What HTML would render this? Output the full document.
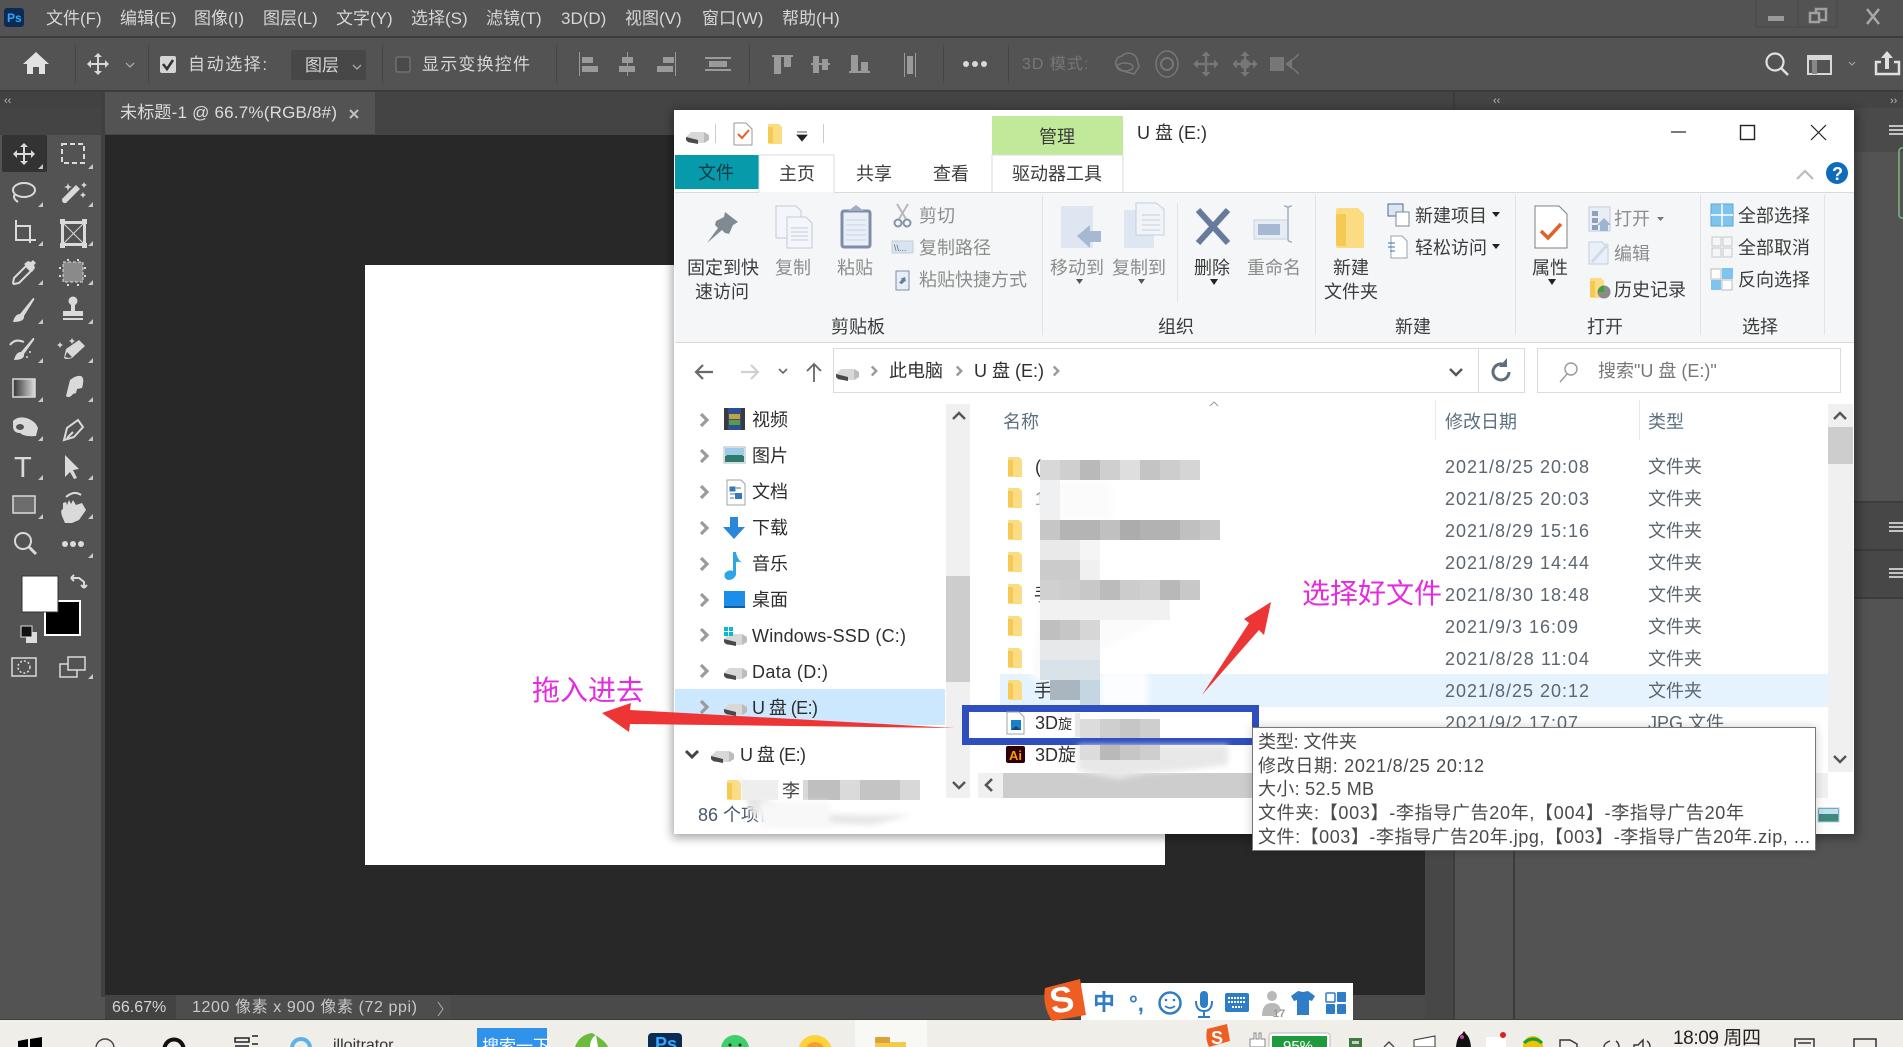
<!DOCTYPE html>
<html lang="zh"><head><meta charset="utf-8"><title>Photoshop</title>
<style>
html,body{margin:0;padding:0;background:#535353;width:1903px;height:1047px;overflow:hidden}
svg{display:block;position:absolute;left:0;top:0}
text{font-family:"Liberation Sans","Noto Sans CJK SC",sans-serif;white-space:pre}
.m{font-size:17px;fill:#d6d6d6}
.r{font-size:18px;fill:#3c3c3c}
.g{font-size:18px;fill:#8d8d8d}
.d{font-size:18px;fill:#5c6670}
.n{font-size:18px;fill:#2e2e2e}
.tt{font-size:18px;fill:#4a4a4a}
</style></head><body>
<svg width="1903" height="1047" viewBox="0 0 1903 1047" xmlns="http://www.w3.org/2000/svg">
<defs>
<filter id="sh" x="-5%" y="-5%" width="110%" height="110%"><feGaussianBlur stdDeviation="5"/></filter>
<filter id="b3" x="-20%" y="-20%" width="140%" height="140%"><feGaussianBlur stdDeviation="3"/></filter>
<path id="mv" d="M0-11l4 4h-3v6h6v-3l4 4-4 4v-3h-6v6h3l-4 4-4-4h3v-6h-6v3l-4-4 4-4v3h6v-6h-3z"/>
<g id="fd"><path d="M0 1q0-1 1-1h10l3 3v17H1q-1 0-1-1z" fill="#fbdc83"/><path d="M0 3h5v16H1q-1 0-1-1z" fill="#f6c955"/></g>
<g id="dr"><path d="M0 7l5-5h13l5 3v5l-5 3H3l-3-3z" fill="#d8d8d8"/><path d="M0 7l12 3v4l-10-2-2-2z" fill="#4a4a4a"/><path d="M18 2l5 3v5l-5 3z" fill="#bcbcbc"/></g>
<path id="ch" d="M-3-6l6 6-6 6" fill="none" stroke="#9a9a9a" stroke-width="3.200"/>
<path id="tri" d="M5 0v5h-5z" fill="#c8c8c8"/>
</defs>

<!-- PS chrome -->
<rect width="1903" height="1047" fill="#535353"/>
<rect y="36" width="1903" height="2" fill="#3d3d3d"/>
<rect y="90" width="1903" height="45" fill="#444"/>
<rect y="90" width="1903" height="2" fill="#3b3b3b"/>
<rect x="4" y="8" width="20" height="19" rx="3" fill="#0d2b52"/>
<text x="7" y="22" font-size="12" font-weight="bold" fill="#31a8ff">Ps</text>
<g class="m">
<text class="m" x="46" y="24">文件(F)</text><text class="m" x="120" y="24">编辑(E)</text><text class="m" x="194" y="24">图像(I)</text><text class="m" x="263" y="24">图层(L)</text><text class="m" x="336" y="24">文字(Y)</text><text class="m" x="411" y="24">选择(S)</text><text class="m" x="486" y="24">滤镜(T)</text><text class="m" x="561" y="24">3D(D)</text><text class="m" x="625" y="24">视图(V)</text><text class="m" x="702" y="24">窗口(W)</text><text class="m" x="782" y="24">帮助(H)</text>
</g>
<!-- ps win btns -->
<path d="M1756 0v27h81V0M1798 0v27" fill="none" stroke="#4a4a4a"/>
<rect x="1768" y="16" width="16" height="5" fill="#9a9a9a"/>
<rect x="1816" y="9" width="10" height="11" fill="none" stroke="#a0a0a0" stroke-width="2.500"/><rect x="1810" y="13" width="9" height="9" fill="#535353" stroke="#a0a0a0" stroke-width="2.500"/>
<path d="M1867 9l12 15M1879 9l-12 15" stroke="#a8a8a8" stroke-width="2.500"/>
<!-- options bar -->
<path d="M36 52l13 12h-4v10h-6v-7h-6v7h-6V64h-4z" fill="#e2e2e2"/>
<g fill="#444"><rect x="75" y="45" width="1" height="38"/><rect x="148" y="45" width="1" height="38"/><rect x="382" y="45" width="1" height="38"/><rect x="556" y="45" width="1" height="38"/><rect x="749" y="45" width="1" height="38"/><rect x="943" y="45" width="1" height="38"/><rect x="1008" y="45" width="1" height="38"/></g>
<use href="#mv" transform="translate(98 64)" fill="#d8d8d8"/>
<path d="M126 63l4 4 4-4" fill="none" stroke="#aaa" stroke-width="1.300"/>
<rect x="160" y="56" width="16" height="17" rx="2" fill="#d5d5d5"/><path d="M163 64l4 5 6-9" fill="none" stroke="#333" stroke-width="2.500"/>
<text class="m" x="188" y="70" letter-spacing="1.600" fill="#cdcdcd">自动选择:</text>
<rect x="291" y="50" width="75" height="30" rx="2" fill="#474747"/>
<text class="m" x="305" y="71" fill="#cdcdcd">图层</text>
<path d="M353 65l4 4 4-4" fill="none" stroke="#aaa" stroke-width="1.300"/>
<rect x="396" y="57" width="14" height="15" rx="2" fill="#4a4a4a" stroke="#707070" stroke-width="1.500"/>
<text class="m" x="422" y="70" fill="#bbb" textLength="108">显示变换控件</text>
<g fill="#9a9a9a">
<rect x="579" y="52" width="1" height="24"/><rect x="582" y="57" width="11" height="6"/><rect x="582" y="66" width="16" height="6"/>
<rect x="627" y="52" width="1" height="24"/><rect x="622" y="57" width="11" height="6"/><rect x="619" y="66" width="16" height="6"/>
<rect x="675" y="52" width="1" height="24"/><rect x="663" y="57" width="11" height="6"/><rect x="657" y="66" width="16" height="6"/>
<rect x="705" y="57" width="26" height="2"/><rect x="709" y="61" width="18" height="6"/><rect x="705" y="69" width="26" height="2"/>
<rect x="772" y="55" width="21" height="2"/><rect x="774" y="57" width="7" height="17"/><rect x="784" y="57" width="7" height="10"/>
<rect x="811" y="63" width="19" height="2"/><rect x="813" y="56" width="6" height="17"/><rect x="822" y="59" width="6" height="11"/>
<rect x="849" y="71" width="21" height="2"/><rect x="851" y="55" width="7" height="16"/><rect x="861" y="62" width="7" height="9"/>
<rect x="904" y="53" width="1" height="24"/><rect x="915" y="53" width="1" height="24"/><rect x="907" y="56" width="6" height="18"/>
</g>
<g fill="#d8d8d8"><circle cx="966" cy="64" r="3"/><circle cx="975" cy="64" r="3"/><circle cx="984" cy="64" r="3"/></g>
<text x="1022" y="69" font-size="16" fill="#777" letter-spacing="1">3D 模式:</text>
<g fill="none" stroke="#777" stroke-width="1.500">
<path d="M1117 67a7 7 0 0 1 5-11 9 9 0 0 1 15 3l2 8-5 7-11-3z"/><ellipse cx="1125" cy="67" rx="8" ry="4"/>
<ellipse cx="1167" cy="64" rx="11" ry="13"/><circle cx="1167" cy="64" r="6" stroke-width="2"/>
</g>
<use href="#mv" transform="translate(1206 64) scale(1.150)" fill="#777"/>
<use href="#mv" transform="translate(1245 64) scale(1.150)" fill="#777"/><circle cx="1245" cy="64" r="5" fill="#777"/>
<path d="M1270 57h14v14h-14z" fill="#777"/><path d="M1299 54l-11 10 11 10" fill="none" stroke="#777" stroke-width="1.500"/><path d="M1285 64l7-5v10z" fill="#777"/>
<circle cx="1775" cy="62" r="8.500" fill="none" stroke="#e0e0e0" stroke-width="2.200"/><path d="M1781 68l7 7" stroke="#e0e0e0" stroke-width="2.500"/>
<rect x="1808" y="56" width="23" height="18" fill="none" stroke="#d8d8d8" stroke-width="2"/><rect x="1808" y="56" width="23" height="4" fill="#d8d8d8"/><rect x="1812" y="60" width="5" height="14" fill="#888"/>
<path d="M1849 62l3 3 3-3" fill="none" stroke="#aaa"/>
<path d="M1881 62h-5v12h23V62h-5" fill="none" stroke="#e0e0e0" stroke-width="2.500"/><path d="M1887 51l6 7h-4v11h-4V58h-4z" fill="#e0e0e0"/>

<!-- tab row -->
<rect x="0" y="92" width="101" height="16" fill="#424242"/>
<text x="4" y="104" font-size="11" fill="#bbb">‹‹</text>
<rect x="101" y="92" width="4" height="905" fill="#404040"/>
<rect x="105" y="92" width="270" height="42" fill="#535353"/>
<text x="120" y="118" font-size="17" fill="#dcdcdc" textLength="217">未标题-1 @ 66.7%(RGB/8#)</text>
<path d="M350 110l8 8M358 110l-8 8" stroke="#c0c0c0" stroke-width="2"/>
<!-- grip -->
<path d="M33 115v8M36 115v8M39 115v8M42 115v8M45 115v8M48 115v8M51 115v8M54 115v8M57 115v8" stroke="#444" stroke-width="1"/>
<!-- canvas -->
<rect x="105" y="135" width="1320" height="860" fill="#282828"/>
<rect x="365" y="265" width="800" height="600" fill="#fff"/>
<!-- status -->
<rect x="105" y="995" width="1320" height="25" fill="#4a4a4a"/>
<rect x="105" y="995" width="71" height="24" fill="#434343"/>
<rect x="176" y="995" width="275" height="24" fill="#4d4d4d"/>
<text x="112" y="1012" font-size="16" fill="#d4d4d4">66.67%</text>
<text x="192" y="1012" font-size="16" fill="#c8c8c8" textLength="225">1200 像素 x 900 像素 (72 ppi)</text>
<path d="M438 1002l5 7-5 7" fill="none" stroke="#aaa"/>
<!-- right panels -->
<rect x="1425" y="135" width="28" height="885" fill="#474747"/>
<rect x="1453" y="92" width="2" height="928" fill="#3c3c3c"/>
<rect x="1513" y="835" width="2" height="185" fill="#3c3c3c"/>
<rect x="1455" y="92" width="448" height="16" fill="#444"/>
<text x="1493" y="104" font-size="11" fill="#bbb">‹‹</text><text x="1890" y="104" font-size="11" fill="#bbb">››</text>
<rect x="1854" y="108" width="49" height="44" fill="#4a4a4a"/>
<rect x="1854" y="502" width="49" height="48" fill="#474747"/><rect x="1854" y="550" width="49" height="48" fill="#474747"/>
<g fill="#3c3c3c"><rect x="1854" y="501" width="49" height="2"/><rect x="1854" y="549" width="49" height="2"/><rect x="1854" y="597" width="49" height="2"/></g>
<g fill="#c4c4c4"><rect x="1889" y="125" width="14" height="2"/><rect x="1889" y="129" width="14" height="2"/><rect x="1889" y="133" width="14" height="2"/><rect x="1889" y="522" width="14" height="2"/><rect x="1889" y="526" width="14" height="2"/><rect x="1889" y="530" width="14" height="2"/><rect x="1889" y="568" width="14" height="2"/><rect x="1889" y="572" width="14" height="2"/><rect x="1889" y="576" width="14" height="2"/></g>
<rect x="1899" y="148" width="8" height="70" rx="3" fill="none" stroke="#7fb77f" stroke-width="1.500"/>

<!-- tool icons -->
<rect x="2" y="135" width="45" height="37" rx="2" fill="#333"/>
<g fill="#dadada" stroke="none">
<use href="#mv" transform="translate(24 154)"/>
<rect x="62" y="144" width="22" height="19" fill="none" stroke="#dadada" stroke-width="2" stroke-dasharray="5 3"/>
<ellipse cx="24" cy="190" rx="11" ry="7" fill="none" stroke="#dadada" stroke-width="2"/><path d="M15 194q-3 4 3 8" fill="none" stroke="#dadada" stroke-width="2"/>
<path d="M62 199l14-14 4 4-14 14q-4 1-4-4z"/><path d="M68 183l1 3 3 1-3 1-1 3-1-3-3-1 3-1zM84 182l1 2 2 1-2 1-1 2-1-2-2-1 2-1zM83 192l1 2 2 1-2 1-1 2-1-2-2-1 2-1z"/>
<path d="M10 225h5v-5h2v5h14v14h5v2h-5v2h-2v-2H15v-16zM17 227v12h12v-12z"/>
<path d="M61 221h25v25H61zM64 224v19h19v-19z" fill-rule="evenodd"/><path d="M64 224l19 19M83 224l-19 19" stroke="#dadada" stroke-width="1"/>
<rect x="60" y="219" width="5" height="5"/><rect x="82" y="219" width="5" height="5"/><rect x="60" y="243" width="5" height="5"/><rect x="82" y="243" width="5" height="5"/>
<path d="M14 278l12-12 5 5-12 12-5 1-1-1z" fill="none" stroke="#dadada" stroke-width="2"/><path d="M24 264l4-3 3 1 2-2 3 3-2 2 1 3-3 4z"/>
<rect x="63" y="262" width="20" height="20" fill="#8a8a8a" stroke="#dadada" stroke-width="1" stroke-dasharray="3 2"/><path d="M61 268h-2M61 276h-2M86 268h-2M86 276h-2M68 259v2M78 259v2M68 284v2M78 284v2" stroke="#dadada" stroke-width="2"/>
<path d="M13 322q2-8 7-8l13-16q2 0 1 2l-10 16q1 6-11 6z"/>
<circle cx="73" cy="301" r="4.500"/><rect x="71" y="304" width="4" height="7"/><rect x="63" y="311" width="20" height="5"/><rect x="63" y="318" width="20" height="2"/>
<path d="M14 360q2-8 7-8l12-14q2 0 1 2l-10 14q1 6-10 6z"/><path d="M10 345q5-7 14-3" fill="none" stroke="#dadada" stroke-width="2"/><circle cx="30" cy="352" r="1"/><circle cx="27" cy="357" r="1"/>
<path d="M66 349l13-9 6 6-13 12q-6 2-8 0z"/><path d="M60 342l1 2 2 1-2 1-1 2-1-2-2-1 2-1zM72 338l1 2 2 1-2 1-1 2-1-2-2-1 2-1z"/><path d="M67 352l5 5-3 1-4-1z" fill="#535353"/>
</g>
<defs><linearGradient id="gr"><stop offset="0" stop-color="#333"/><stop offset="1" stop-color="#ddd"/></linearGradient></defs>
<rect x="13" y="379" width="22" height="18" fill="url(#gr)" stroke="#dadada" stroke-width="1.500"/>
<g fill="#dadada">
<path d="M66 396l4-16q6-5 11-4 4 2 1 12l-5 1-1 4-3 1q-4 5-7 2z"/>
<path d="M13 421q6-6 16-2 7 3 9 9l-2 8q-12 1-16-3-7 0-7-7z"/><ellipse cx="20" cy="427" rx="4" ry="3" fill="#535353"/>
<path d="M64 440l3-12 11-8 5 7-9 10zM67 438l6-6" fill="none" stroke="#dadada" stroke-width="2"/>
<text x="14" y="477" font-family="Liberation Serif" font-size="29" fill="#dadada">T</text>
<path d="M65 455l14 14-6 1 4 8-3 1-4-7-5 5z"/>
</g>
<rect x="13" y="496" width="22" height="17" fill="#6d6d6d" stroke="#dadada" stroke-width="1.500"/>
<path d="M62 516q-2-6 1-7v-6l3-1 1 3 2-5 2 4 2-4 3 5 6-2 4 7-7 10-7 3-7 0z" fill="#dadada"/><path d="M66 497q8-7 15-2" fill="none" stroke="#dadada" stroke-width="2"/>
<circle cx="23" cy="541" r="8" fill="none" stroke="#dadada" stroke-width="2"/><path d="M29 547l7 7" stroke="#dadada" stroke-width="3"/>
<g fill="#dadada"><circle cx="65" cy="544" r="3"/><circle cx="73" cy="544" r="3"/><circle cx="81" cy="544" r="3"/></g>
<g id="tr"><use href="#tri" x="38" y="164"/><use href="#tri" x="88" y="164"/><use href="#tri" x="38" y="202"/><use href="#tri" x="88" y="202"/><use href="#tri" x="38" y="241"/><use href="#tri" x="88" y="241"/><use href="#tri" x="38" y="280"/><use href="#tri" x="88" y="280"/><use href="#tri" x="38" y="319"/><use href="#tri" x="88" y="319"/><use href="#tri" x="38" y="358"/><use href="#tri" x="88" y="358"/><use href="#tri" x="38" y="397"/><use href="#tri" x="88" y="397"/><use href="#tri" x="38" y="436"/><use href="#tri" x="88" y="436"/><use href="#tri" x="38" y="475"/><use href="#tri" x="88" y="475"/><use href="#tri" x="38" y="514"/><use href="#tri" x="88" y="514"/><use href="#tri" x="88" y="553"/><use href="#tri" x="88" y="674"/></g>
<rect x="45" y="601" width="35" height="34" fill="#000" stroke="#fff" stroke-width="2"/>
<rect x="22" y="576" width="36" height="36" fill="#fff" stroke="#333" stroke-width="1"/>
<path d="M71 578h8l5 4v6M84 588l-3-3M84 588l3-3M71 578l3-3M71 578l3 3" fill="none" stroke="#dadada" stroke-width="2"/>
<rect x="26" y="632" width="11" height="11" fill="#ddd"/><rect x="21" y="626" width="11" height="11" fill="#111" stroke="#ddd"/>
<rect x="12" y="658" width="24" height="18" fill="none" stroke="#dadada" stroke-width="1.500"/><circle cx="24" cy="667" r="6" fill="none" stroke="#dadada" stroke-width="1.500" stroke-dasharray="2 2"/>
<rect x="60" y="664" width="17" height="13" fill="none" stroke="#dadada" stroke-width="1.500"/><rect x="68" y="657" width="17" height="13" fill="#535353" stroke="#dadada" stroke-width="1.500"/>

<!-- EXPLORER -->
<rect x="672" y="110" width="1186" height="728" fill="#000" opacity=".35" filter="url(#sh)"/>
<rect x="674" y="110" width="1180" height="724" fill="#fff"/>
<use href="#dr" x="686" y="130"/>
<rect x="715" y="124" width="1" height="19" fill="#ccc"/>
<path d="M734 123h12l6 6v16h-18z" fill="#fff" stroke="#9a9a9a"/><path d="M738 134l4 4 7-8" fill="none" stroke="#e0622a" stroke-width="2"/>
<use href="#fd" x="768" y="124"/>
<path d="M797 132h10M797 135h10l-5 6z" fill="#222" stroke="#222" stroke-width=".8"/>
<rect x="823" y="124" width="1" height="19" fill="#ccc"/>
<rect x="992" y="116" width="131" height="39" fill="#c0e99a"/>
<text class="r" x="1039" y="143" fill="#2f3a2a">管理</text>
<text class="n" x="1137" y="139">U 盘 (E:)</text>
<path d="M1671 132h15" stroke="#222" stroke-width="1.200"/>
<rect x="1740.500" y="125.500" width="14" height="14" fill="none" stroke="#222" stroke-width="1.400"/>
<path d="M1811 125l15 15M1826 125l-15 15" stroke="#222" stroke-width="1.200"/>
<!-- tabs -->
<rect x="675" y="155" width="84" height="34" fill="#069aaa"/>
<text x="698" y="179" font-size="18" fill="#0a3a44">文件</text>
<path d="M759 192V155h75v37" fill="#fff" stroke="#dadbdc"/>
<text class="r" x="779" y="180">主页</text><text class="r" x="856" y="180">共享</text><text class="r" x="933" y="180">查看</text>
<path d="M992 192V155h131v37" fill="#fff" stroke="#dadbdc"/>
<text class="r" x="1012" y="180">驱动器工具</text>
<path d="M1797 179l8-8 8 8" fill="none" stroke="#bbb" stroke-width="2.200"/>
<circle cx="1837" cy="173" r="11" fill="#0f6cbd"/><text x="1832" y="180" font-size="18" font-weight="bold" fill="#fff">?</text>
<!-- ribbon -->
<rect x="675" y="192" width="1179" height="150" fill="#f5f6f7"/>
<rect x="675" y="192" width="84" height="1" fill="#dadbdc"/><rect x="834" y="192" width="1020" height="1" fill="#dadbdc"/>
<rect x="675" y="342" width="1179" height="1" fill="#d9d9d9"/>
<g fill="#e2e3e4"><rect x="1042" y="195" width="1" height="140"/><rect x="1177" y="203" width="1" height="100"/><rect x="1315" y="195" width="1" height="140"/><rect x="1515" y="195" width="1" height="140"/><rect x="1700" y="195" width="1" height="140"/><rect x="1824" y="195" width="1" height="140"/></g>
<!-- pin -->
<path d="M725 212l13 10-5 3-4 9-4-1-3-3-15 13 11-15-3-3 1-4 8-4z" fill="#7f8a93"/>
<text class="r" x="687" y="274">固定到快</text><text class="r" x="695" y="298">速访问</text>
<!-- copy -->
<g fill="#f3f6fa" stroke="#c4cbd6"><path d="M776 206h20l5 5v27h-25z"/><path d="M787 217h19l6 6v25h-25z"/></g>
<path d="M791 228h17M791 232h17M791 236h17M791 240h17" stroke="#c4cbd6"/>
<text class="g" x="775" y="274">复制</text>
<rect x="842" y="211" width="28" height="36" rx="2" fill="#e9eef7" stroke="#7e8ea8" stroke-width="3"/><path d="M848 211l8-6 8 6z" fill="#9faec4"/>
<path d="M846 220h20M846 225h20M846 230h20M846 235h20M846 240h20" stroke="#c8d4e6"/>
<text class="g" x="837" y="274">粘贴</text>
<path d="M897 204l9 15M908 204l-9 15" stroke="#b5b8bd" stroke-width="2"/><circle cx="898" cy="223" r="3.500" fill="none" stroke="#8193ad" stroke-width="2"/><circle cx="907" cy="223" r="3.500" fill="none" stroke="#8193ad" stroke-width="2"/>
<text class="g" x="919" y="222">剪切</text>
<rect x="892" y="241" width="21" height="12" fill="#d9e3f0" stroke="#c4cfdd"/><text x="894" y="251" font-size="9" fill="#667">\\...</text>
<text class="g" x="919" y="254">复制路径</text>
<rect x="896" y="271" width="13" height="19" fill="#e6eef8" stroke="#7e8ea8"/><path d="M899 283l3-4h-2l5-2 1 5-1-1-3 3z" fill="#667c9c"/>
<text class="g" x="919" y="286">粘贴快捷方式</text>
<rect x="1061" y="206" width="32" height="42" fill="#dde6f1"/><path d="M1077 236l13-11v6h11v11h-11v6z" fill="#a6b8d2"/>
<text class="g" x="1050" y="274" textLength="54">移动到</text>
<path d="M1076 279h7l-3.500 5z" fill="#555"/>
<rect x="1124" y="210" width="30" height="38" fill="#dde6f1"/><path d="M1136 203h20l8 6v26h-28z" fill="#f1f4f8" stroke="#c4cfdd"/><path d="M1142 215h18M1142 220h18M1142 225h18M1142 230h18" stroke="#c4cfdd"/>
<text class="g" x="1112" y="274" textLength="54">复制到</text>
<path d="M1138 279h7l-3.500 5z" fill="#555"/>
<path d="M1198 210l30 33M1228 210l-30 33" stroke="#667a9c" stroke-width="6"/>
<text class="r" x="1194" y="274">删除</text>
<path d="M1210 279h8l-4 6z" fill="#222"/>
<rect x="1254" y="220" width="34" height="19" fill="#e6ecf4" stroke="#c9d3df"/><rect x="1258" y="224" width="22" height="11" fill="#a6b8d2"/><path d="M1292 206q-4 0-4 3v30q0 3 4 3M1284 206q4 0 4 3" fill="none" stroke="#9fb0c6" stroke-width="1.500"/>
<text class="g" x="1247" y="274">重命名</text>
<use href="#fd" transform="translate(1336 208) scale(2 2)"/>
<text class="r" x="1333" y="274">新建</text><text class="r" x="1324" y="298">文件夹</text>
<rect x="1388" y="204" width="15" height="12" fill="#dbe6f2" stroke="#4d6c93"/><rect x="1396" y="212" width="13" height="14" fill="#fff" stroke="#7d8a9b"/>
<text class="r" x="1415" y="222">新建项目</text><path d="M1492 212h8l-4 5z" fill="#222"/>
<path d="M1391 236h11l5 5v17h-16z" fill="#fff" stroke="#9aa4ae"/><path d="M1388 243h7M1388 247h7M1390 251h5" stroke="#2a7bc2"/>
<text class="r" x="1415" y="254">轻松访问</text><path d="M1492 244h8l-4 5z" fill="#222"/>
<path d="M1535 206h24l8 8v34h-32z" fill="#fff" stroke="#808080"/><path d="M1541 231l7 7 13-14" fill="none" stroke="#e0622a" stroke-width="3.500"/>
<text class="r" x="1532" y="274">属性</text><path d="M1548 279h8l-4 6z" fill="#222"/>
<rect x="1589" y="207" width="21" height="24" fill="#e9eef5" stroke="#c4cfdd"/><path d="M1592 211h6v5h-6zM1592 218h6v5h-6zM1592 225h6v5h-6z" fill="#8ea1bb"/><path d="M1604 218l7 7h-3v6h-8v-6h-3z" fill="#9fb4d0"/>
<text class="g" x="1614" y="225">打开</text><path d="M1657 217h7l-3.500 4z" fill="#777"/>
<path d="M1589 242h13l6 6v16h-19z" fill="#e9f0f8" stroke="#c4cfdd"/><path d="M1592 262l16-18" stroke="#d0dbe8" stroke-width="3"/>
<text class="g" x="1614" y="260">编辑</text>
<use href="#fd" x="1590" y="278"/><circle cx="1604" cy="292" r="6.500" fill="#8a8a8a"/><path d="M1598 292a6.500 6.500 0 0 1 6-6.500v6.500z" fill="#3aa63a"/>
<text class="r" x="1614" y="296">历史记录</text>
<g>
<rect x="1711" y="204" width="22" height="22" fill="#7fc4ee" stroke="#5aa6d6"/><path d="M1722 204v22M1711 215h22" stroke="#fff" stroke-width="1.500"/>
<g fill="none" stroke="#c8c8c8"><rect x="1712" y="237" width="9" height="9"/><rect x="1723" y="237" width="9" height="9"/><rect x="1712" y="248" width="9" height="9"/><rect x="1723" y="248" width="9" height="9"/></g>
<rect x="1711" y="269" width="10" height="10" fill="#fff" stroke="#bbb"/><rect x="1722" y="268" width="11" height="11" fill="#7fc4ee"/><rect x="1711" y="280" width="10" height="10" fill="#7fc4ee"/><rect x="1722" y="280" width="10" height="10" fill="#fff" stroke="#bbb"/>
</g>
<text class="r" x="1738" y="222">全部选择</text><text class="r" x="1738" y="254">全部取消</text><text class="r" x="1738" y="286">反向选择</text>
<g font-size="18" fill="#555"><text class="r" x="831" y="333" fill="#555">剪贴板</text><text class="r" x="1158" y="333">组织</text><text class="r" x="1395" y="333">新建</text><text class="r" x="1587" y="333">打开</text><text class="r" x="1742" y="333">选择</text></g>
<!-- address -->
<path d="M713 372h-17M703 365l-7 7 7 7" fill="none" stroke="#6a6a6a" stroke-width="2.200"/>
<path d="M741 372h17M751 365l7 7-7 7" fill="none" stroke="#d0d0d0" stroke-width="2.200"/>
<path d="M779 369l4 4 4-4" fill="none" stroke="#666" stroke-width="1.600"/>
<path d="M814 382v-18M807 371l7-7 7 7" fill="none" stroke="#666" stroke-width="1.800"/>
<rect x="833.500" y="348.500" width="691" height="44" fill="#fff" stroke="#dadbdc"/>
<rect x="1478" y="349" width="1" height="43" fill="#dadbdc"/>
<use href="#dr" x="836" y="367"/>
<g><use href="#ch" transform="translate(874 371) scale(.75)"/><text class="n" x="889" y="377">此电脑</text><use href="#ch" transform="translate(959 371) scale(.75)"/><text class="n" x="974" y="377">U 盘 (E:)</text><use href="#ch" transform="translate(1056 371) scale(.75)"/></g>
<path d="M1450 369l6 6 6-6" fill="none" stroke="#555" stroke-width="2.400"/>
<path d="M1509 372a8 8 0 1 1-4-7" fill="none" stroke="#606d7c" stroke-width="3"/><path d="M1507 358v9h-8z" fill="#606d7c"/>
<rect x="1537.500" y="348.500" width="303" height="44" fill="#fff" stroke="#dadbdc"/>
<circle cx="1571" cy="369" r="6" fill="none" stroke="#999" stroke-width="1.400"/><path d="M1567 374l-7 8" stroke="#999" stroke-width="1.400"/>
<text x="1598" y="377" font-size="18" fill="#777">搜索"U 盘 (E:)"</text>
<!-- nav pane -->
<rect x="675" y="689" width="270" height="36" fill="#cce8ff"/>
<g><use href="#ch" transform="translate(704 420)"/><use href="#ch" transform="translate(704 456)"/><use href="#ch" transform="translate(704 492)"/><use href="#ch" transform="translate(704 528)"/><use href="#ch" transform="translate(704 564)"/><use href="#ch" transform="translate(704 600)"/><use href="#ch" transform="translate(704 635)"/><use href="#ch" transform="translate(704 671)"/><use href="#ch" transform="translate(704 707)"/></g>
<rect x="724" y="408" width="21" height="22" fill="#2d4f8f"/><rect x="724" y="408" width="4" height="22" fill="#3a3a3a"/><rect x="741" y="408" width="4" height="22" fill="#3a3a3a"/><path d="M729 414h11v5h-11z" fill="#c7a23a"/><path d="M729 420h11v5h-11z" fill="#5a9a4a"/>
<rect x="724" y="447" width="21" height="16" fill="#fff" stroke="#a8b8c8"/><path d="M725 456q10-6 19 0v6h-19z" fill="#2f7a6a"/><rect x="725" y="448" width="19" height="7" fill="#9ecbe8"/>
<path d="M727 480h14l4 4v21h-18z" fill="#fff" stroke="#9aa4ae"/><path d="M730 487h5v4h-5zM736 488h5M730 494h11M730 498h4" stroke="#3777b7" fill="#3777b7"/><rect x="735" y="493" width="7" height="6" fill="#3777b7"/>
<path d="M730 517h8v10h7l-11 12-11-12h7z" fill="#2b88d8"/>
<path d="M733 552h3q1 8 8 12-4-3-8-2v13q-2 5-8 5-5-2-3-7 4-4 8-2z" fill="#2fa4e7"/>
<rect x="724" y="591" width="21" height="17" fill="#1a8ee8"/><rect x="724" y="606" width="21" height="2" fill="#0b5fa5"/>
<use href="#dr" x="724" y="632"/><g fill="#00bcd4"><rect x="724" y="627" width="4" height="4"/><rect x="729" y="627" width="4" height="4"/><rect x="724" y="632" width="4" height="4"/><rect x="729" y="632" width="4" height="4"/></g>
<use href="#dr" x="724" y="666"/><use href="#dr" x="724" y="702"/>
<text class="n" x="752" y="426">视频</text><text class="n" x="752" y="462">图片</text><text class="n" x="752" y="498">文档</text><text class="n" x="752" y="534">下载</text><text class="n" x="752" y="570">音乐</text><text class="n" x="752" y="606">桌面</text>
<text class="n" x="752" y="642" textLength="154">Windows-SSD (C:)</text><text class="n" x="752" y="678" textLength="76">Data (D:)</text><text class="n" x="752" y="714" textLength="66">U 盘 (E:)</text>
<path d="M686 751l6 6 6-6" fill="none" stroke="#444" stroke-width="3"/>
<use href="#dr" x="711" y="749"/><text class="n" x="740" y="761" textLength="66">U 盘 (E:)</text>
<use href="#fd" x="727" y="780"/>
<text x="698" y="821" font-size="18" fill="#46586b">86 个项目</text>
<!-- nav scrollbar -->
<rect x="946" y="404" width="24" height="394" fill="#f0f0f0"/>
<rect x="946" y="576" width="24" height="106" fill="#cdcdcd"/>
<path d="M953 419l6-6 6 6" fill="none" stroke="#555" stroke-width="2.400"/><path d="M953 782l6 6 6-6" fill="none" stroke="#555" stroke-width="2.400"/>
<!-- file list -->
<path d="M1210 406l4-4 4 4" fill="none" stroke="#999"/>
<text x="1003" y="428" font-size="18" fill="#5d7082">名称</text>
<rect x="1435" y="400" width="1" height="40" fill="#e8e8e8"/><rect x="1639" y="400" width="1" height="40" fill="#e8e8e8"/>
<text x="1445" y="428" font-size="18" fill="#5d7082">修改日期</text><text x="1648" y="428" font-size="18" fill="#5d7082">类型</text>
<rect x="1000" y="674" width="828" height="33" fill="#e5f3ff"/>
<g><use href="#fd" x="1008" y="457"/><use href="#fd" x="1008" y="488"/><use href="#fd" x="1008" y="520"/><use href="#fd" x="1008" y="552"/><use href="#fd" x="1008" y="584"/><use href="#fd" x="1008" y="616"/><use href="#fd" x="1008" y="648"/><use href="#fd" x="1008" y="680"/></g>
<g>
<text class="d" x="1445" y="473" textLength="144">2021/8/25 20:08</text><text class="d" x="1648" y="473">文件夹</text>
<text class="d" x="1445" y="505" textLength="144">2021/8/25 20:03</text><text class="d" x="1648" y="505">文件夹</text>
<text class="d" x="1445" y="537" textLength="144">2021/8/29 15:16</text><text class="d" x="1648" y="537">文件夹</text>
<text class="d" x="1445" y="569" textLength="144">2021/8/29 14:44</text><text class="d" x="1648" y="569">文件夹</text>
<text class="d" x="1445" y="601" textLength="144">2021/8/30 18:48</text><text class="d" x="1648" y="601">文件夹</text>
<text class="d" x="1445" y="633" textLength="133">2021/9/3 16:09</text><text class="d" x="1648" y="633">文件夹</text>
<text class="d" x="1445" y="665" textLength="144">2021/8/28 11:04</text><text class="d" x="1648" y="665">文件夹</text>
<text class="d" x="1445" y="697" textLength="144">2021/8/25 20:12</text><text class="d" x="1648" y="697">文件夹</text>
<text class="d" x="1445" y="729" textLength="133">2021/9/2 17:07</text><text class="d" x="1648" y="729">JPG 文件</text>
</g>
<!-- file scrollbars -->
<rect x="1828" y="404" width="25" height="368" fill="#f0f0f0"/>
<rect x="1828" y="427" width="25" height="37" fill="#cdcdcd"/>
<path d="M1834 419l6-6 6 6" fill="none" stroke="#555" stroke-width="2.400"/><path d="M1834 756l6 6 6-6" fill="none" stroke="#555" stroke-width="2.400"/>
<rect x="978" y="773" width="850" height="25" fill="#f0f0f0"/>
<rect x="1003" y="773" width="260" height="25" fill="#cdcdcd"/>
<path d="M992 779l-6 6 6 6" fill="none" stroke="#555" stroke-width="2.600"/>
<rect x="1818" y="808" width="21" height="14" fill="#3f8a80" stroke="#b5cfe0"/><rect x="1819" y="809" width="19" height="5" fill="#bfe0f0"/>
<!-- row text fragments -->
<text class="n" x="1035" y="473">(</text><text class="n" x="1035" y="505">1</text><text class="n" x="1034" y="601">手</text><text class="n" x="1034" y="697">手</text>
<!-- smudges -->
<path d="M1042 482h70v38h-70zM1036 500l8-20 8 40-8 10zM1040 600h120v20l-60 30-10 30h-58z" fill="#fbfbfb" filter="url(#b3)"/>
<rect x="1100" y="672" width="48" height="36" fill="#fff" opacity=".85" filter="url(#b3)"/>
<path d="M1040 480h20v40h-20z" fill="#eef0f1"/>
<g>
<rect x="1040" y="460" width="20" height="20" fill="#d8d8d8"/><rect x="1060" y="460" width="20" height="20" fill="#cfcfcf"/><rect x="1080" y="460" width="20" height="20" fill="#b9b9b9"/><rect x="1100" y="460" width="20" height="20" fill="#cfcfcf"/><rect x="1120" y="460" width="20" height="20" fill="#dedede"/><rect x="1140" y="460" width="20" height="20" fill="#c4c4c4"/><rect x="1160" y="460" width="20" height="20" fill="#cdcdcd"/><rect x="1180" y="460" width="20" height="20" fill="#d5d5d5"/>
<rect x="1040" y="520" width="20" height="20" fill="#c6c6c6"/><rect x="1060" y="520" width="40" height="20" fill="#b4b4b4"/><rect x="1100" y="520" width="20" height="20" fill="#c0c0c0"/><rect x="1120" y="520" width="20" height="20" fill="#acacac"/><rect x="1140" y="520" width="40" height="20" fill="#b2b2b2"/><rect x="1180" y="520" width="20" height="20" fill="#c0c0c0"/><rect x="1200" y="520" width="20" height="20" fill="#c8c8c8"/>
<rect x="1040" y="540" width="40" height="20" fill="#e9e9e9"/><rect x="1080" y="540" width="20" height="20" fill="#f5f5f5"/>
<rect x="1040" y="560" width="40" height="20" fill="#cbcbcb"/><rect x="1080" y="560" width="20" height="20" fill="#f0f0f0"/>
<rect x="1040" y="580" width="20" height="20" fill="#d0d0d0"/><rect x="1060" y="580" width="20" height="20" fill="#cdcdcd"/><rect x="1080" y="580" width="20" height="20" fill="#c8c8c8"/><rect x="1100" y="580" width="20" height="20" fill="#bbb"/><rect x="1120" y="580" width="20" height="20" fill="#ccc"/><rect x="1140" y="580" width="20" height="20" fill="#d0d0d0"/><rect x="1160" y="580" width="20" height="20" fill="#b8b8b8"/><rect x="1180" y="580" width="20" height="20" fill="#c8c8c8"/>
<rect x="1040" y="600" width="130" height="20" fill="#f1f1f1"/>
<rect x="1040" y="620" width="20" height="20" fill="#bfbfbf"/><rect x="1060" y="620" width="20" height="20" fill="#c6c6c6"/><rect x="1080" y="620" width="20" height="20" fill="#d6d6d6"/>
<rect x="1040" y="640" width="60" height="20" fill="#e6e8ea"/><rect x="1040" y="660" width="60" height="20" fill="#d9e2e8"/>
<rect x="1050" y="680" width="30" height="20" fill="#a9b6c0"/><rect x="1080" y="680" width="20" height="27" fill="#c4d6e2"/>
</g>
<!-- blue rect -->
<rect x="965.500" y="708.500" width="290" height="33" fill="#fff" stroke="#2f4fbf" stroke-width="7"/>
<path d="M1007 712h12l5 5v17h-17z" fill="#fff" stroke="#9aa4ae"/><rect x="1011" y="720" width="10" height="10" fill="#1a7fc4"/><path d="M1011 730l5-4 5 4z" fill="#0a4c80"/>
<text class="n" x="1035" y="729" fill="#222">3D</text><text x="1058" y="729" font-size="14" fill="#333">旋</text>
<rect x="1075" y="713" width="5" height="24" fill="#e8e8e8"/>
<rect x="1080" y="719" width="20" height="19" fill="#dcdcdc"/><rect x="1100" y="719" width="20" height="19" fill="#cfcfcf"/><rect x="1120" y="719" width="20" height="19" fill="#c6c6c6"/><rect x="1140" y="719" width="20" height="19" fill="#cecece"/>
<rect x="1006" y="746" width="19" height="17" rx="2" fill="#2e0006"/><text x="1009" y="760" font-size="13" font-weight="bold" fill="#ff9a00">Ai</text>
<text class="n" x="1035" y="761" fill="#222">3D旋</text>
<path d="M1078 745h150v20l-50 6-30 2-30 6-40-8z" fill="#e8e8e8" filter="url(#b3)"/>
<rect x="1080" y="745" width="20" height="15" fill="#dcdcdc"/><rect x="1100" y="745" width="20" height="15" fill="#b9b9b9"/><rect x="1120" y="745" width="20" height="15" fill="#c6c6c6"/><rect x="1140" y="745" width="20" height="15" fill="#cecece"/>
<!-- nav smudge -->
<path d="M737 775q20 20 40 32l10 5 70 3 55 0-40 10-60-2-60-8z" fill="#e6e6e6" filter="url(#b3)"/>
<rect x="742" y="780" width="36" height="20" fill="#eeeeee"/>
<text x="782" y="797" font-size="18" fill="#444">李</text>
<rect x="803" y="780" width="20" height="20" fill="#d8d8d8"/><rect x="808" y="780" width="32" height="20" fill="#bfbfbf"/><rect x="840" y="780" width="20" height="20" fill="#dadada"/><rect x="860" y="780" width="40" height="20" fill="#c4c4c4"/><rect x="900" y="780" width="20" height="20" fill="#d8d8d8"/>
<rect x="760" y="802" width="70" height="26" fill="#f8f8f8" filter="url(#b3)"/>
<!-- tooltip -->
<rect x="1252" y="727" width="564" height="124" fill="#000" opacity=".2" filter="url(#sh)"/>
<rect x="1252.500" y="727.500" width="563" height="123" fill="#fff" stroke="#777"/>
<text class="tt" x="1258" y="748" textLength="99">类型: 文件夹</text>
<text class="tt" x="1258" y="772" textLength="226">修改日期: 2021/8/25 20:12</text>
<text class="tt" x="1258" y="795" textLength="116">大小: 52.5 MB</text>
<text class="tt" x="1258" y="819" textLength="486">文件夹:【003】-李指导广告20年,【004】-李指导广告20年</text>
<text class="tt" x="1258" y="843" textLength="552">文件:【003】-李指导广告20年.jpg,【003】-李指导广告20年.zip, ...</text>
<!-- arrows -->
<path d="M602 713l29-10-1 7 325 18-325-4-1 8z" fill="#ee3535"/>
<path d="M1202 695l47-72-5-4 27-17-7 33-5-5z" fill="#ee3535"/>
<text x="532" y="700" font-size="28" fill="#e52be0">拖入进去</text>
<text x="1302" y="603" font-size="28" fill="#e52be0">选择好文件</text>

<!-- taskbar -->
<rect y="1020" width="1903" height="27" fill="#efeee9"/>
<rect y="1019" width="1903" height="1" fill="#3c3c3c"/>
<rect x="855" y="1020" width="72" height="27" fill="#f8f8f5"/>
<path d="M18 1041l10-2v8H18zM30 1039l12-2v10H30z" fill="#000"/>
<circle cx="105" cy="1048" r="9" fill="none" stroke="#444" stroke-width="1.400"/>
<circle cx="174" cy="1049" r="9.500" fill="none" stroke="#111" stroke-width="4"/>
<path d="M235 1038h14v4h-14zM252 1036h6M252 1044h6M235 1046h14" fill="none" stroke="#222" stroke-width="1.500"/>
<circle cx="301" cy="1048" r="9" fill="none" stroke="#5fb2e8" stroke-width="4"/>
<text x="333" y="1050" font-size="16" fill="#333">jlloitrator</text>
<rect x="477" y="1028" width="70" height="19" fill="#2f93ec"/>
<text x="482" y="1052" font-size="17" fill="#fff">搜索一下</text>
<path d="M592 1033q14 8 16 14h-33q4-12 17-14z" fill="#6dbb3c"/><path d="M590 1047q0-8 6-12l2 12z" fill="#fff"/>
<rect x="648" y="1033" width="34" height="20" rx="4" fill="#0d2b52"/><text x="655" y="1050" font-size="18" font-weight="bold" fill="#31a8ff">Ps</text>
<circle cx="735" cy="1049" r="14" fill="#3ecf6a"/><circle cx="730" cy="1045" r="1.500" fill="#222"/><circle cx="740" cy="1045" r="1.500" fill="#222"/>
<circle cx="815" cy="1052" r="17" fill="#ffd23a"/><circle cx="815" cy="1052" r="10" fill="#f59e2a"/>
<rect x="875" y="1042" width="31" height="8" fill="#f5c94a"/><rect x="875" y="1037" width="15" height="6" rx="1" fill="#d9a53a"/>
<!-- sogou -->
<rect x="1081" y="983" width="272" height="37" fill="#fff"/>
<path d="M1045 988l35-9 6 36-34 6q-10-15-7-33z" fill="#ee5d22"/>
<text transform="translate(1052 1014) rotate(-10)" font-size="36" font-weight="bold" fill="#fff">S</text>
<text x="1093" y="1010" font-size="22" font-weight="bold" fill="#2f7cc7">中</text>
<text x="1129" y="1011" font-size="22" font-weight="bold" fill="#2f7cc7">°,</text>
<circle cx="1170" cy="1003" r="10.500" fill="none" stroke="#2f7cc7" stroke-width="2.500"/><circle cx="1166" cy="1000" r="1.300" fill="#2f7cc7"/><circle cx="1174" cy="1000" r="1.300" fill="#2f7cc7"/><path d="M1165 1006q5 4 10 0" fill="none" stroke="#2f7cc7" stroke-width="1.600"/>
<rect x="1200" y="991" width="8" height="17" rx="4" fill="#2f7cc7"/><path d="M1196 1001q0 10 8 10t8-10M1204 1011v5M1198 1017h12" fill="none" stroke="#2f7cc7" stroke-width="2"/>
<rect x="1225" y="993" width="24" height="19" rx="2" fill="#2f7cc7"/><path d="M1228 998h18M1228 1002h18M1232 1007h10" stroke="#fff" stroke-width="2" stroke-dasharray="2 1"/>
<circle cx="1272" cy="996" r="5" fill="#b8b8b8"/><path d="M1262 1016q0-13 10-13 8 0 9 8l-7 5z" fill="#b8b8b8"/><text x="1273" y="1017" font-size="11" font-weight="bold" fill="#999">17</text>
<path d="M1298 991l5 1 5-1 7 5-3 5-3-1v15h-12v-15l-3 1-3-5z" fill="#2f7cc7"/>
<rect x="1326" y="993" width="9" height="9" rx="1" fill="none" stroke="#2f7cc7" stroke-width="1.500"/><rect x="1337" y="992" width="9" height="10" rx="1" fill="#2f7cc7"/><rect x="1326" y="1004" width="9" height="10" rx="1" fill="#2f7cc7"/><rect x="1337" y="1004" width="9" height="10" rx="1" fill="#2f7cc7"/>
<!-- tray -->
<path d="M1207 1029l20-5 3 17-21 6q-4-8-2-18z" fill="#ee5d22"/><text x="1211" y="1044" font-size="18" font-weight="bold" fill="#fff">S</text>
<path d="M1250 1047v-8h4v-6h2v6h3v-6h2v6h4v8z" fill="#fff" stroke="#888"/>
<rect x="1269" y="1033" width="61" height="20" rx="3" fill="#fff" stroke="#bbb"/><rect x="1272" y="1036" width="55" height="14" fill="#1f9a3f"/><text x="1283" y="1051" font-size="15" fill="#fff">95%</text>
<rect x="1349" y="1038" width="13" height="9" fill="#3f7a3f"/><rect x="1352" y="1041" width="7" height="3" fill="#ccc"/>
<path d="M1384 1047l5-5 5 5" fill="none" stroke="#444" stroke-width="1.400"/>
<path d="M1414 1040l21-4v11h-21z" fill="#fff" stroke="#333"/>
<path d="M1456 1047q1-11 6-13l2-3 2 3q4 3 5 13z" fill="#111"/><circle cx="1462" cy="1037" r="2" fill="#d43ab0"/>
<rect x="1486" y="1037" width="20" height="12" fill="#fff"/><circle cx="1503" cy="1035" r="3" fill="#e02020"/>
<circle cx="1533" cy="1046" r="10" fill="#f2c200"/><path d="M1524 1043q9-8 18 0" fill="none" stroke="#18a038" stroke-width="3"/>
<path d="M1560 1047v-7h10l7 4v3" fill="none" stroke="#333" stroke-width="1.400"/>
<path d="M1604 1047q0-4 6-6M1616 1041q3 2 3 6" fill="none" stroke="#333" stroke-width="1.400"/>
<path d="M1634 1047v-2h4l5-5v7M1647 1041q3 2 3 6" fill="none" stroke="#333" stroke-width="1.400"/>
<text x="1673" y="1044" font-size="19" fill="#222" textLength="88">18:09 周四</text>
<rect x="1795" y="1039" width="19" height="14" fill="none" stroke="#333" stroke-width="1.500"/><path d="M1798 1043h13" stroke="#333" stroke-width="1.500"/>
<rect x="1854" y="1039" width="22" height="14" fill="none" stroke="#333" stroke-width="1.500"/>
</svg>
</body></html>
